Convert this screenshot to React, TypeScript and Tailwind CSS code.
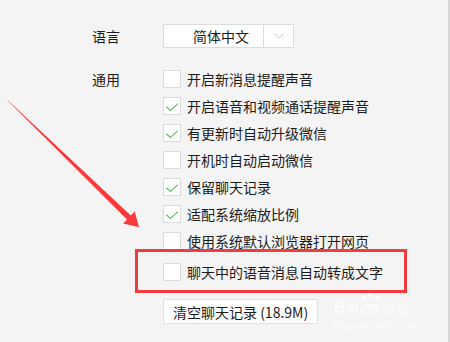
import React from 'react';

const options: { label: string; checked: boolean }[] = [
  { label: '开启新消息提醒声音', checked: false },
  { label: '开启语音和视频通话提醒声音', checked: true },
  { label: '有更新时自动升级微信', checked: true },
  { label: '开机时自动启动微信', checked: false },
  { label: '保留聊天记录', checked: true },
  { label: '适配系统缩放比例', checked: true },
  { label: '使用系统默认浏览器打开网页', checked: false },
];

function CheckBox({ checked }: { checked: boolean }) {
  return (
    <div className="w-[18px] h-[18px] shrink-0 bg-white border border-[#dcdcdc]">
      {checked && (
        <svg width="16" height="16" viewBox="0 0 16 16">
          <path d="M2.4 8.7 L6.4 12.4 L14 5.6" fill="none" stroke="#5cc35f" strokeWidth="1.2" />
        </svg>
      )}
    </div>
  );
}

function Row({ label, checked }: { label: string; checked: boolean }) {
  return (
    <div className="flex items-center h-[18px] gap-[6px]">
      <CheckBox checked={checked} />
      <span className="leading-none whitespace-nowrap">{label}</span>
    </div>
  );
}

export default function App() {
  return (
    <div
      className="relative w-[450px] h-[342px] bg-[#f4f4f4] text-[14px] text-[#1b1b1b] overflow-hidden"
      style={{ fontFamily: '"Microsoft YaHei", "Noto Sans CJK SC", sans-serif' }}
    >
      <div className="absolute right-0 top-0 w-[2px] h-full bg-[#d8d8d8]" />

      <div className="pl-[92px] pt-[24px]">
        {/* language */}
        <div className="flex items-center">
          <span className="w-[71px] leading-none">语言</span>
          <div className="flex h-[24px] w-[131px] bg-white border border-[#dcdcdc]">
            <div className="flex-1 flex items-center pl-[29px] leading-none">简体中文</div>
            <div className="w-[30px] border-l border-[#dcdcdc] flex items-center justify-center">
              <svg width="10" height="6" viewBox="0 0 10 6">
                <path d="M0.5 0.5 L5 5 L9.5 0.5" fill="none" stroke="#c9c9c9" strokeWidth="1" />
              </svg>
            </div>
          </div>
        </div>

        {/* general */}
        <div className="flex mt-[22px]">
          <div className="w-[71px] h-[18px] flex items-center leading-none">通用</div>
          <div className="flex flex-col">
            <div className="flex flex-col gap-[9px]">
              {options.map((o, i) => (
                <Row key={i} label={o.label} checked={o.checked} />
              ))}
            </div>
            <div className="mt-[13px]">
              <Row label="聊天中的语音消息自动转成文字" checked={false} />
            </div>
            <div className="mt-[18px]">
              <button className="h-[25px] px-[9px] bg-white border border-[#e2e2e2] text-[14px] leading-none text-[#1b1b1b]">
                清空聊天记录 (18.9M)
              </button>
            </div>
          </div>
        </div>
      </div>

      {/* watermark */}
      <div className="absolute left-[334px] top-[300px] flex flex-col text-white/70 leading-none select-none">
        <div className="flex items-end gap-[1px]">
          <span className="text-[16px] font-bold" style={{ fontFamily: 'Arial, "Liberation Sans", sans-serif' }}>
            Bai
          </span>
          <span className="relative text-[12px] font-bold bg-white/60 text-[#f4f4f4] rounded-[6px] px-[2px]">
            du
            <span className="absolute left-[1px] -top-[9px] w-[5px] h-[6px] rounded-full bg-white/60" />
            <span className="absolute left-[8px] -top-[12px] w-[5px] h-[6px] rounded-full bg-white/60" />
            <span className="absolute left-[15px] -top-[9px] w-[5px] h-[6px] rounded-full bg-white/60" />
          </span>
          <span className="text-[14px] ml-[2px]">经验</span>
        </div>
        <span className="text-[11px] mt-[4px]" style={{ fontFamily: 'Arial, "Liberation Sans", sans-serif' }}>
          jingyan.baidu.com
        </span>
      </div>

      {/* annotation: red box */}
      <div className="absolute left-[135px] top-[249px] w-[272px] h-[44px] border-[3px] border-[#f23b3e]" />

      {/* annotation: red arrow */}
      <svg className="absolute left-0 top-0" width="450" height="342" viewBox="0 0 450 342">
        <polygon
          points="7,100 8,100.5 130.8,215.6 134.7,211.6 139,227.3 123.2,223.6 127,219.6"
          fill="#fa3a3a"
        />
      </svg>
    </div>
  );
}
